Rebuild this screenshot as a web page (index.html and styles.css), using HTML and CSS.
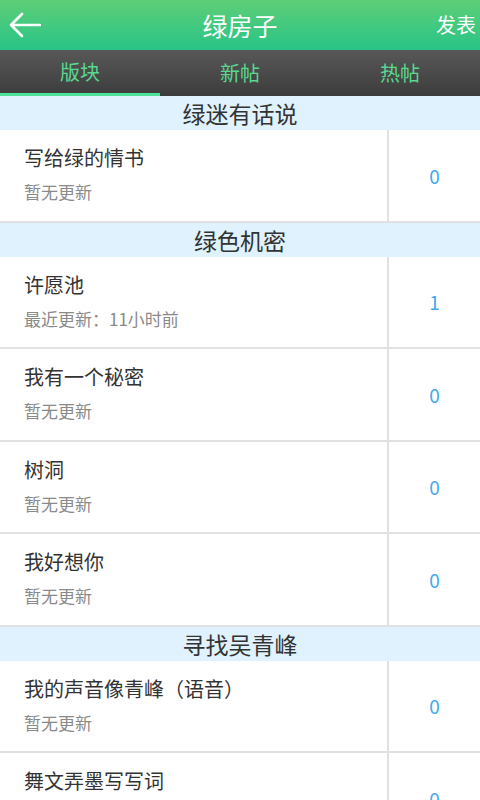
FILE: index.html
```html
<!DOCTYPE html>
<html lang="zh-CN">
<head>
    <meta charset="UTF-8">
    <meta name="viewport" content="width=device-width, initial-scale=1.0">
    <title>绿房子</title>
    <link rel="stylesheet" href="styles.css">
</head>
<body>

<div class="topbar">
    <svg class="back" width="32" height="26" viewBox="0 0 32 26">
        <path d="M31 13 H3 M13 2 L2 13 L13 24" fill="none" stroke="#fff" stroke-width="2.6" stroke-linecap="round" stroke-linejoin="round"/>
    </svg>
    <div class="title">绿房子</div>
    <div class="post">发表</div>
</div>

<div class="tabs">
    <div class="tab active">版块</div>
    <div class="tab">新帖</div>
    <div class="tab">热帖</div>
</div>

<div class="section">绿迷有话说</div>
<div class="row">
    <div class="info">
        <div class="name">写给绿的情书</div>
        <div class="sub">暂无更新</div>
    </div>
    <div class="count">0</div>
</div>

<div class="section">绿色机密</div>
<div class="row">
    <div class="info">
        <div class="name">许愿池</div>
        <div class="sub">最近更新：11小时前</div>
    </div>
    <div class="count">1</div>
</div>
<div class="row">
    <div class="info">
        <div class="name">我有一个秘密</div>
        <div class="sub">暂无更新</div>
    </div>
    <div class="count">0</div>
</div>
<div class="row">
    <div class="info">
        <div class="name">树洞</div>
        <div class="sub">暂无更新</div>
    </div>
    <div class="count">0</div>
</div>
<div class="row">
    <div class="info">
        <div class="name">我好想你</div>
        <div class="sub">暂无更新</div>
    </div>
    <div class="count">0</div>
</div>

<div class="section">寻找吴青峰</div>
<div class="row">
    <div class="info">
        <div class="name">我的声音像青峰（语音）</div>
        <div class="sub">暂无更新</div>
    </div>
    <div class="count">0</div>
</div>
<div class="row">
    <div class="info">
        <div class="name">舞文弄墨写写词</div>
        <div class="sub">暂无更新</div>
    </div>
    <div class="count">0</div>
</div>

</body>
</html>
```

FILE: styles.css
```css
body {
    margin: 0;
    width: 480px;
    height: 800px;
    overflow: hidden;
    font-family: "Noto Sans CJK SC", "Noto Sans", sans-serif;
    background: #fff;
}
.topbar {
    height: 50px;
    display: flex;
    align-items: center;
    background: linear-gradient(#5fce77, #27c487);
    color: #fff;
    position: relative;
}
.back {
    margin-left: 9px;
    margin-top: -1px;
}
.title {
    position: absolute;
    left: 0;
    right: 0;
    text-align: center;
    font-size: 25px;
    line-height: 50px;
    pointer-events: none;
}
.post {
    margin-left: auto;
    margin-right: 4px;
    font-size: 20px;
    margin-top: -2px;
}
.tabs {
    height: 46px;
    display: flex;
    background: linear-gradient(#585858, #3c3c3c);
}
.tab {
    flex: 1;
    text-align: center;
    color: #58d98f;
    font-size: 20px;
    line-height: 46px;
    box-sizing: border-box;
}
.tab.active {
    border-bottom: 3px solid #4de29a;
    line-height: 43px;
}
.section {
    height: 34px;
    line-height: 34px;
    text-align: center;
    background: #dff2fd;
    color: #333;
    font-size: 23px;
}
.row {
    height: 90.5px;
    display: flex;
    border-bottom: 2px solid #e1e1e1;
}
.row:last-child {
    border-bottom: none;
}
.info {
    width: 389px;
    border-right: 2px solid #e1e1e1;
    padding-left: 24px;
    box-sizing: border-box;
}
.name {
    font-size: 20px;
    color: #333;
    margin-top: 14px;
    line-height: 28px;
}
.sub {
    font-size: 17px;
    color: #8a8a8a;
    margin-top: 9px;
    line-height: 22px;
}
.count {
    flex: 1;
    display: flex;
    align-items: center;
    justify-content: center;
    color: #44a8ee;
    font-size: 19px;
}
```
